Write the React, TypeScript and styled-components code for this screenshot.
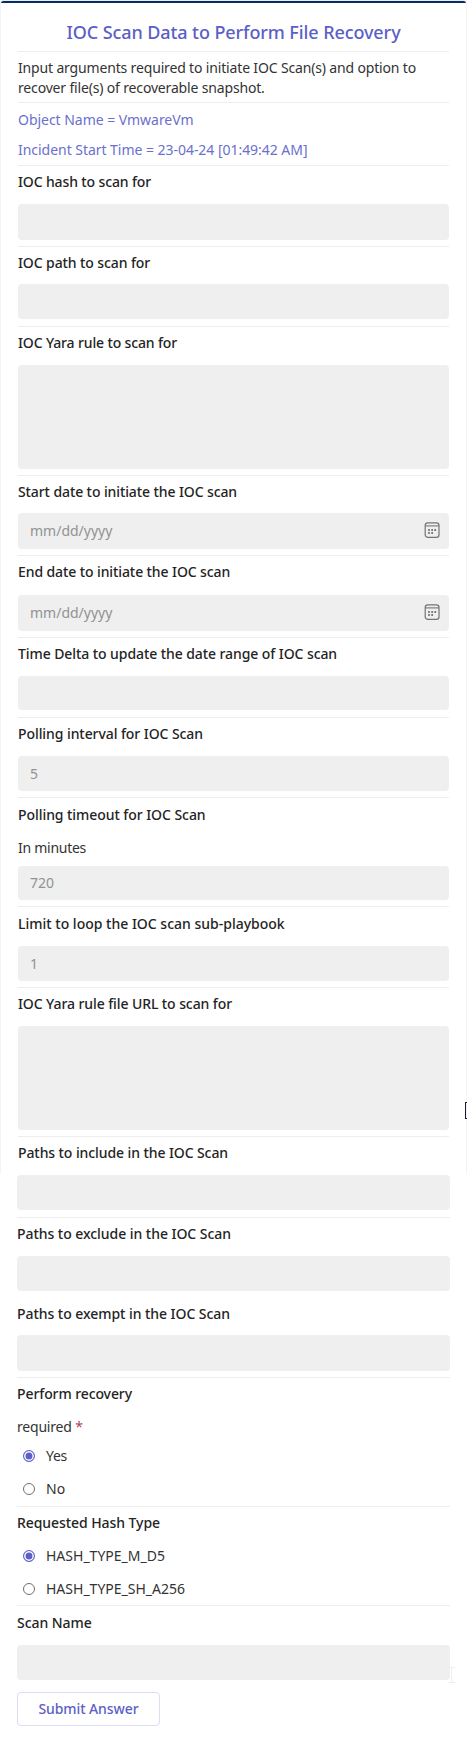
import React from 'react';
import styled, { createGlobalStyle } from 'styled-components';

const Global = createGlobalStyle`
  *, *::before, *::after { box-sizing: border-box; }
  body {
    margin: 0;
    background: #fff;
    color: #242424;
    font-family: "Noto Sans", "Open Sans", sans-serif;
    font-stretch: semi-condensed;
    font-size: 14px;
    line-height: 20px;
  }
`;

const Page = styled.main`
  position: relative;
  height: 1740px;
  overflow: hidden;
`;

const UpperCard = styled.section`
  height: 1174px;
  padding: 0 17px;
  border: 1px solid #f4f4f4;
  border-top: 0;
  border-bottom: 0;
`;

const TopBar = styled.div`
  height: 3px;
  margin: 0 -17px;
  border-top: 1px solid #e9edf3;
  border-radius: 3px 3px 0 0;
  background: #052c66;
`;

const LowerCard = styled.section`
  padding: 1px 17px 0;
`;

const Title = styled.h1`
  margin: 17px 0 6px;
  color: #5b5fc7;
  font-size: 18px;
  font-weight: 500;
  line-height: 25px;
  letter-spacing: -0.09px;
  text-align: center;
`;

const Divider = styled.hr`
  height: 1px;
  margin: 0;
  border: 0;
  background: #eeeeee;
`;

const Line = styled.div<{ $track?: number; $top?: number; $strong?: boolean; $accent?: boolean }>`
  height: 20px;
  margin-top: ${p => p.$top ?? 6}px;
  font-weight: ${p => (p.$strong ? 500 : 400)};
  color: ${p => (p.$accent ? '#6b6fce' : p.$strong ? '#242424' : '#333')};
  letter-spacing: ${p => p.$track ?? 0}px;
  white-space: nowrap;
`;

const Control = styled.div<{ $gap: number; $height: number; $after: number }>`
  display: flex;
  align-items: center;
  justify-content: space-between;
  height: ${p => p.$height}px;
  margin: ${p => p.$gap}px 0 ${p => p.$after}px;
  padding: 0 9px 0 12px;
  border-radius: 4px;
  background: #efefef;
  color: #929292;
`;

const Choice = styled.div<{ $top: number; $track?: number }>`
  display: flex;
  align-items: center;
  gap: 11px;
  height: 20px;
  margin-top: ${p => p.$top}px;
  padding-left: 6px;
  color: #333;
  letter-spacing: ${p => p.$track ?? 0}px;
`;

const Dot = styled.span<{ $on?: boolean }>`
  width: 12px;
  height: 12px;
  border: 1px solid ${p => (p.$on ? '#6468cb' : '#707070')};
  border-radius: 50%;
  background: ${p => (p.$on ? '#5b5fc7' : '#fff')};
  box-shadow: inset 0 0 0 1.5px #fff;
`;

const Asterisk = styled.span`
  color: #b0406c;
`;

const Submit = styled.button`
  display: block;
  width: 143px;
  height: 34px;
  padding: 0;
  border: 1px solid #dcdcf5;
  border-radius: 4px;
  background: #fff;
  color: #5b5fc7;
  font: inherit;
  font-weight: 500;
  letter-spacing: -0.09px;
`;

const Spacer = styled.div<{ $h: number }>`
  height: ${p => p.$h}px;
`;

const EdgePointer = styled.div`
  position: absolute;
  top: 1102px;
  right: 0;
  width: 2px;
  height: 17px;
  border: 1px solid #1a1a2a;
  border-right: 0;
`;

const TextCursor = styled.svg`
  position: absolute;
  top: 1667px;
  left: 448px;
`;

const CalendarSvg = styled.svg`
  margin-top: -2px;
`;

function CalendarIcon() {
  return (
    <CalendarSvg width="16" height="16" viewBox="0 0 16 16" fill="none" stroke="#747474">
      <rect x="1.2" y="0.9" width="13.8" height="14.4" rx="2.6" strokeWidth="1.2" />
      <path d="M1.2 3.9h13.8" strokeWidth="1.1" />
      <g fill="#666" stroke="none">
        <circle cx="5" cy="8.1" r="1" />
        <circle cx="8.1" cy="8.1" r="1" />
        <circle cx="11.2" cy="8.1" r="1" />
        <circle cx="5" cy="11.1" r="1" />
        <circle cx="8.1" cy="11.1" r="1" />
      </g>
    </CalendarSvg>
  );
}

type FieldProps = {
  label: string;
  track: number;
  top?: number;
  hint?: string;
  gap?: number;
  height?: number;
  after?: number;
  value?: string;
  date?: boolean;
  divider?: boolean;
};

function Field({ label, track, top = 6, hint, gap = 12, height = 35, after = 6, value, date, divider = true }: FieldProps) {
  return (
    <>
      <Line $strong $track={track} $top={top}>{label}</Line>
      {hint && <Line $top={13} $track={-0.27}>{hint}</Line>}
      <Control $gap={gap} $height={height} $after={after}>
        <span>{value}</span>
        {date && <CalendarIcon />}
      </Control>
      {divider && <Divider />}
    </>
  );
}

export default function App() {
  return (
    <Page>
      <Global />
      <UpperCard>
        <TopBar />
        <Title>IOC Scan Data to Perform File Recovery</Title>
        <Divider />
        <Line $track={-0.158}>Input arguments required to initiate IOC Scan(s) and option to</Line>
        <Line $track={-0.163} $top={0}>recover file(s) of recoverable snapshot.</Line>
        <Spacer $h={4} />
        <Divider />
        <Line $accent $track={-0.03} $top={7}>Object Name = VmwareVm</Line>
        <Line $accent $track={-0.036} $top={10}>Incident Start Time = 23-04-24 [01:49:42 AM]</Line>
        <Spacer $h={5} />
        <Divider />
        <Field label="IOC hash to scan for" track={-0.13} height={36} />
        <Field label="IOC path to scan for" track={-0.1} gap={11} after={7} />
        <Field label="IOC Yara rule to scan for" track={-0.14} height={104} />
        <Field label="Start date to initiate the IOC scan" track={-0.1} gap={11} height={36} value="mm/dd/yyyy" date />
        <Field label="End date to initiate the IOC scan" track={-0.1} gap={13} height={36} value="mm/dd/yyyy" date />
        <Field label="Time Delta to update the date range of IOC scan" track={-0.08} height={34} after={7} />
        <Field label="Polling interval for IOC Scan" track={-0.075} value="5" />
        <Field label="Polling timeout for IOC Scan" track={-0.06} top={7} hint="In minutes" gap={8} height={34} value="720" />
        <Field label="Limit to loop the IOC scan sub-playbook" track={0} top={7} value="1" />
        <Field label="IOC Yara rule file URL to scan for" track={-0.09} height={104} />
        <Line $strong $track={-0.09}>Paths to include in the IOC Scan</Line>
      </UpperCard>
      <LowerCard>
        <Control $gap={0} $height={35} $after={7} />
        <Divider />
        <Field label="Paths to exclude in the IOC Scan" track={-0.045} after={0} divider={false} />
        <Field label="Paths to exempt in the IOC Scan" track={-0.05} top={13} gap={11} height={36} />
        <Line $strong $track={-0.09}>Perform recovery</Line>
        <Line $top={13} $track={-0.2}>required <Asterisk>*</Asterisk></Line>
        <Choice $top={9} $track={-0.27}><Dot $on />Yes</Choice>
        <Choice $top={13} $track={0.1}><Dot />No</Choice>
        <Spacer $h={7} />
        <Divider />
        <Line $strong $track={-0.07}>Requested Hash Type</Line>
        <Choice $top={13}><Dot $on />HASH_TYPE_M_D5</Choice>
        <Choice $top={13}><Dot />HASH_TYPE_SH_A256</Choice>
        <Spacer $h={6} />
        <Divider />
        <Field label="Scan Name" track={-0.05} top={7} after={12} divider={false} />
        <Submit>Submit Answer</Submit>
      </LowerCard>
      <EdgePointer />
      <TextCursor width="8" height="17" viewBox="0 0 8 17" fill="none" stroke="#ededed">
        <path d="M0.5 0.5h6.5M0.5 15.5h6.5M3.7 0.5v15" />
      </TextCursor>
    </Page>
  );
}
